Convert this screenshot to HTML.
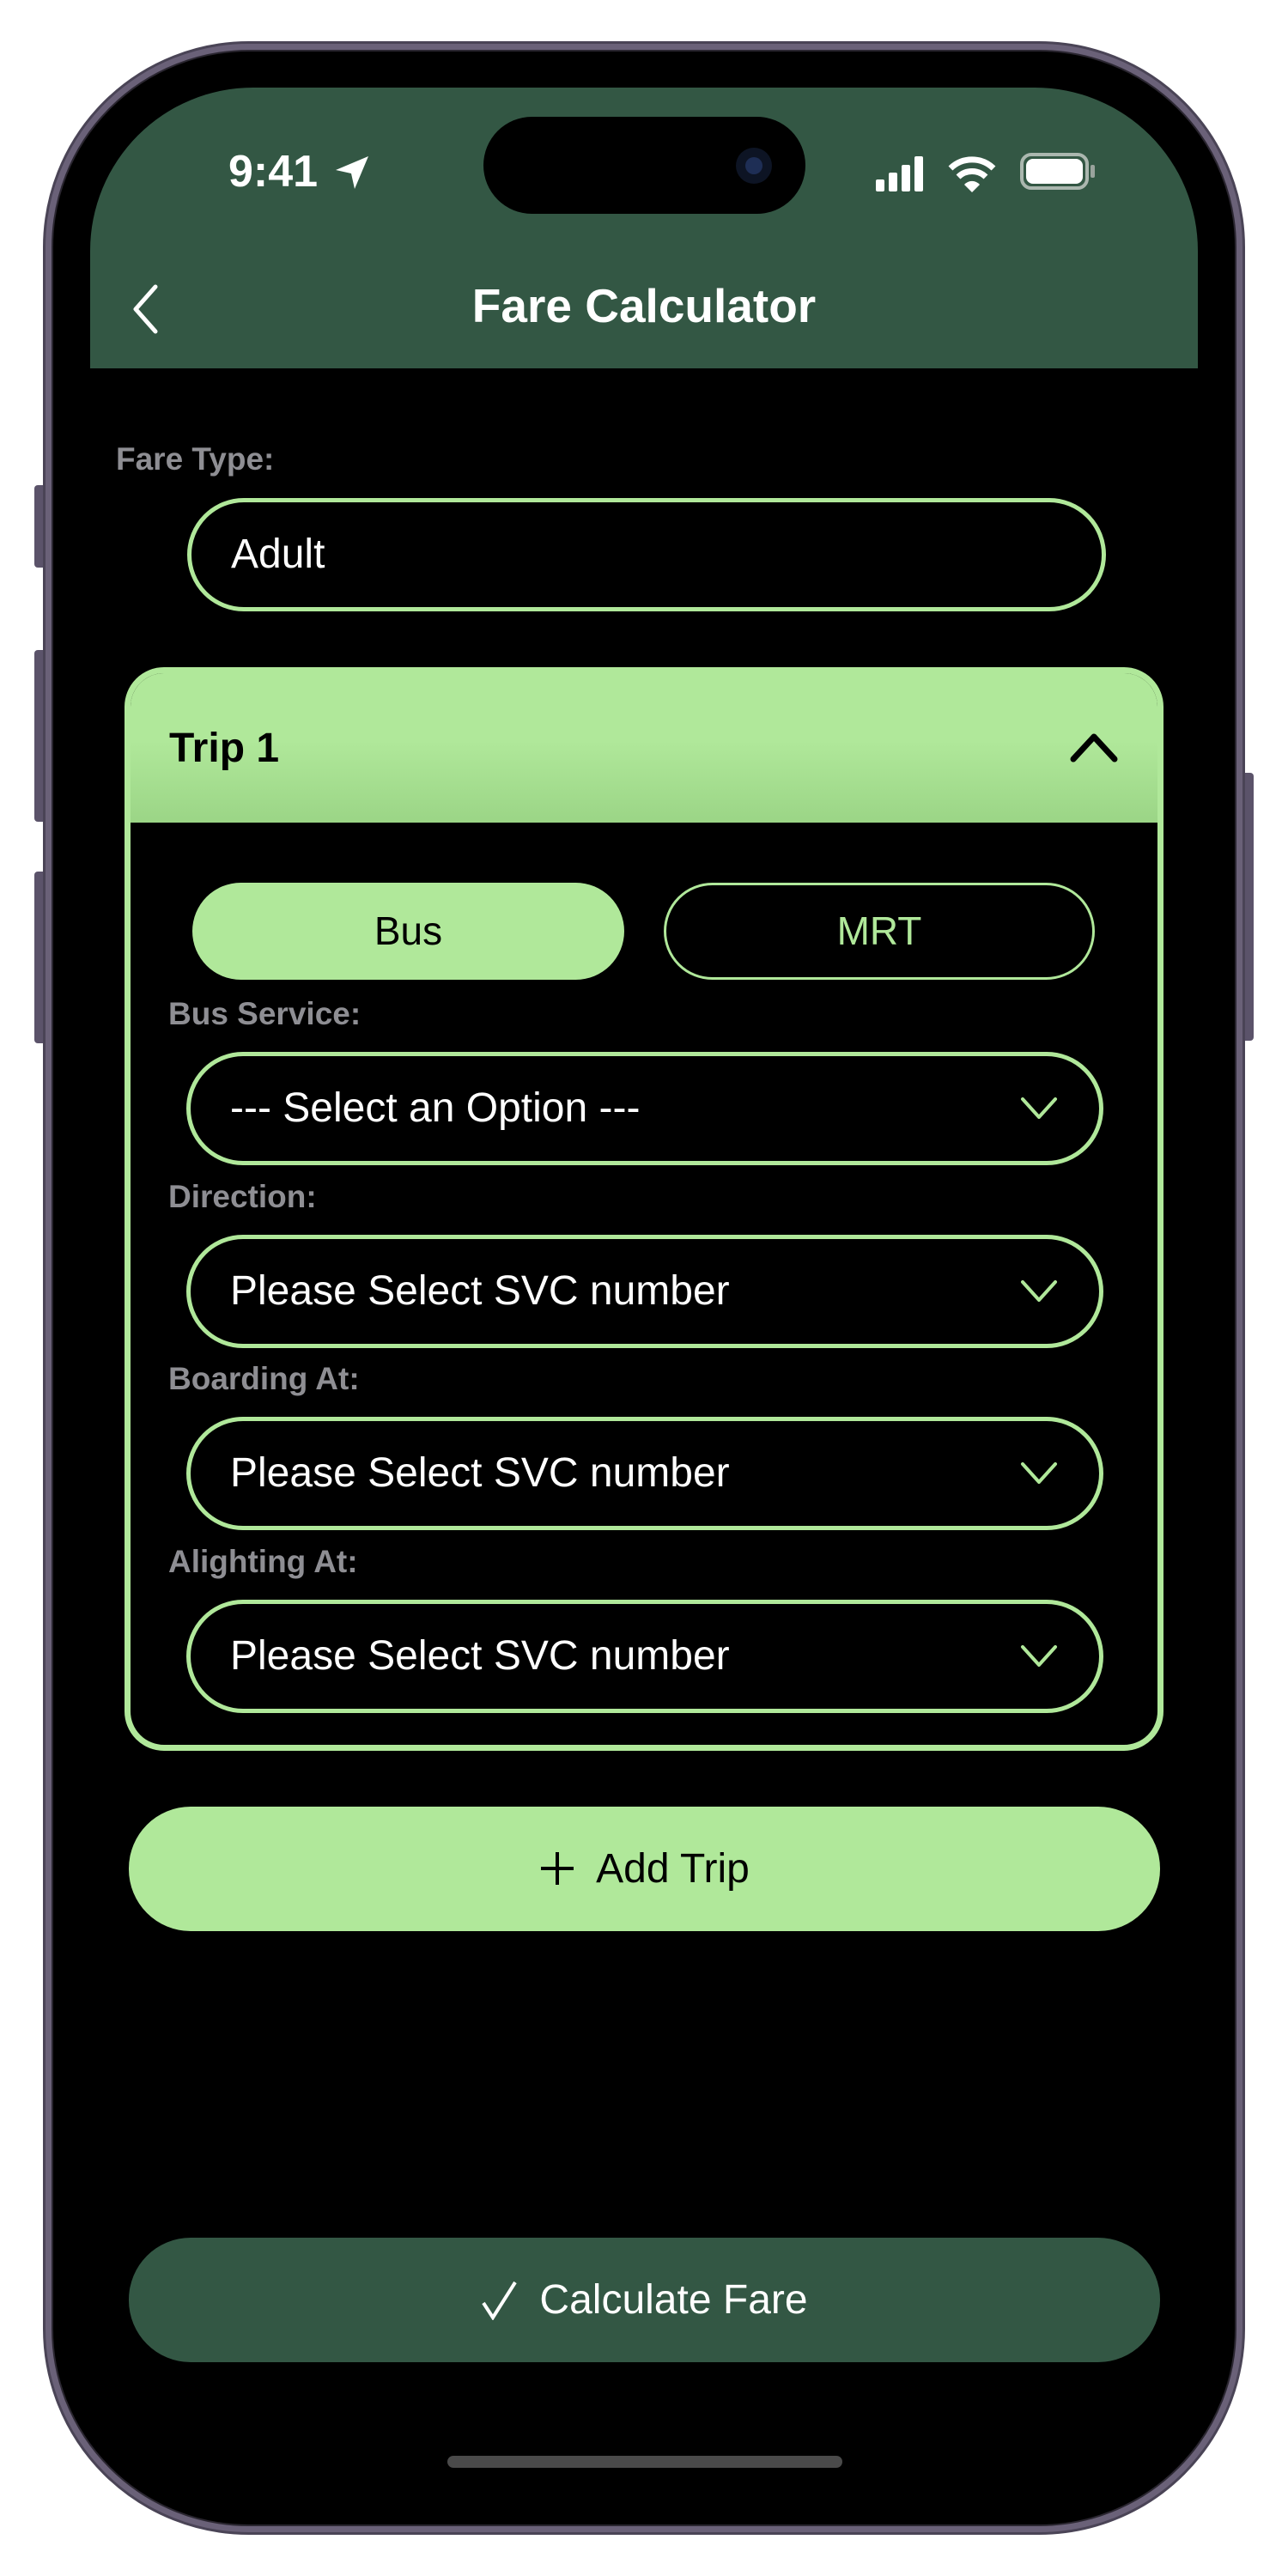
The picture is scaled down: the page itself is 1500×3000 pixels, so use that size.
<!DOCTYPE html>
<html><head><meta charset="utf-8">
<style>
*{margin:0;padding:0;box-sizing:border-box}
body{width:1500px;height:3000px;background:#fff;position:relative;overflow:hidden;font-family:"Liberation Sans",sans-serif}
.abs{position:absolute}
.frame{left:50px;top:48px;width:1400px;height:2904px;border-radius:240px;background:#6a6178;border:3px solid #4a4456}
.bezel{left:60px;top:58px;width:1380px;height:2884px;border-radius:230px;background:#000;border:2px solid #2a2630}
.screen{left:105px;top:102px;width:1290px;height:2796px;border-radius:190px;background:#000;overflow:hidden}
.hdr{left:0;top:0;width:1290px;height:327px;background:#335744}
.btn{background:#5b536a;border-radius:4px}
.lbl{color:#8e8e93;font-weight:bold;font-size:37px}
.field{border:5px solid #b0e89a;border-radius:66px;height:132px;color:#fff;font-size:48px;line-height:122px;padding-left:46px}
.chev{position:absolute;right:48px;top:46px}
</style></head><body>
<div class="abs btn" style="left:40px;top:565px;width:14px;height:96px"></div>
<div class="abs btn" style="left:40px;top:757px;width:14px;height:200px"></div>
<div class="abs btn" style="left:40px;top:1015px;width:14px;height:200px"></div>
<div class="abs btn" style="left:1446px;top:900px;width:14px;height:312px"></div>
<div class="abs frame"></div>
<div class="abs bezel"></div>
<div class="abs screen">
  <div class="abs hdr"></div>
  <div class="abs" style="left:161px;top:68px;color:#fff;font-size:52px;font-weight:bold">9:41</div>
  <svg class="abs" style="left:282px;top:76px" width="46" height="46" viewBox="0 0 46 46"><path d="M42 4 L4 20 L22 24 L26 42 Z" fill="#fff"/></svg>
  <div class="abs" style="left:458px;top:34px;width:375px;height:113px;border-radius:57px;background:#000"></div>
  <div class="abs" style="left:752px;top:70px;width:42px;height:42px;border-radius:21px;background:#0d1424"></div>
  <div class="abs" style="left:763px;top:81px;width:20px;height:20px;border-radius:10px;background:#1e2e55"></div>
  <div class="abs" style="left:915px;top:107px;width:10px;height:14px;background:#fff;border-radius:2px"></div>
  <div class="abs" style="left:930px;top:99px;width:10px;height:22px;background:#fff;border-radius:2px"></div>
  <div class="abs" style="left:945px;top:90px;width:10px;height:31px;background:#fff;border-radius:2px"></div>
  <div class="abs" style="left:960px;top:80px;width:10px;height:41px;background:#fff;border-radius:2px"></div>
  <svg class="abs" style="left:998px;top:78px" width="58" height="46" viewBox="0 0 58 46"><path d="M4 16 A36 36 0 0 1 54 16" stroke="#fff" stroke-width="7" fill="none"/><path d="M13 26 A23 23 0 0 1 45 26" stroke="#fff" stroke-width="7" fill="none"/><path d="M20 35 L29 44 L38 35 A12 12 0 0 0 20 35Z" fill="#fff"/></svg>
  <div class="abs" style="left:1083px;top:76px;width:80px;height:43px;border:4px solid #c9d0cb;border-radius:13px;opacity:.8"></div>
  <div class="abs" style="left:1090px;top:83px;width:66px;height:29px;background:#fff;border-radius:8px"></div>
  <div class="abs" style="left:1165px;top:90px;width:5px;height:15px;background:#9aa39d;border-radius:2px"></div>
  <svg class="abs" style="left:48px;top:228px" width="34" height="60" viewBox="0 0 34 60"><path d="M28 4 L5 30 L28 56" stroke="#fff" stroke-width="5" fill="none" stroke-linecap="round" stroke-linejoin="round"/></svg>
  <div class="abs" style="left:0;width:1290px;top:222px;text-align:center;color:#fff;font-size:55px;font-weight:bold">Fare Calculator</div>
  <div class="abs lbl" style="left:30px;top:412px">Fare Type:</div>
  <div class="abs field" style="left:113px;top:478px;width:1070px;height:132px">Adult</div>
  <div class="abs" style="left:40px;top:675px;width:1210px;height:1262px;border:7px solid #b0e89a;border-radius:46px;background:#000;overflow:hidden">
    <div class="abs" style="left:0;top:0;width:1196px;height:174px;background:linear-gradient(#b0e89a 45%,#9bd586)"></div>
    <div class="abs" style="left:45px;top:60px;font-size:48px;font-weight:bold;color:#000">Trip 1</div>
    <svg class="abs" style="left:1092px;top:66px" width="60" height="40" viewBox="0 0 60 40"><path d="M6 34 L30 8 L54 34" stroke="#000" stroke-width="7" fill="none" stroke-linecap="round" stroke-linejoin="round"/></svg>
  </div>
  <div class="abs" style="left:119px;top:926px;width:503px;height:113px;border-radius:57px;background:#b0e89a;color:#000;font-size:46px;text-align:center;line-height:113px">Bus</div>
  <div class="abs" style="left:668px;top:926px;width:502px;height:113px;border-radius:57px;border:3px solid #b0e89a;color:#b0e89a;font-size:46px;text-align:center;line-height:107px">MRT</div>
  <div class="abs lbl" style="left:91px;top:1058px">Bus Service:</div>
  <div class="abs field" style="left:112px;top:1123px;width:1068px">--- Select an Option ---<svg class="chev" width="44" height="30" viewBox="0 0 44 30"><path d="M3 4 L22 25 L41 4" stroke="#b0e89a" stroke-width="4" fill="none" stroke-linecap="round" stroke-linejoin="round"/></svg></div>
  <div class="abs lbl" style="left:91px;top:1271px">Direction:</div>
  <div class="abs field" style="left:112px;top:1336px;width:1068px">Please Select SVC number<svg class="chev" width="44" height="30" viewBox="0 0 44 30"><path d="M3 4 L22 25 L41 4" stroke="#b0e89a" stroke-width="4" fill="none" stroke-linecap="round" stroke-linejoin="round"/></svg></div>
  <div class="abs lbl" style="left:91px;top:1483px">Boarding At:</div>
  <div class="abs field" style="left:112px;top:1548px;width:1068px">Please Select SVC number<svg class="chev" width="44" height="30" viewBox="0 0 44 30"><path d="M3 4 L22 25 L41 4" stroke="#b0e89a" stroke-width="4" fill="none" stroke-linecap="round" stroke-linejoin="round"/></svg></div>
  <div class="abs lbl" style="left:91px;top:1696px">Alighting At:</div>
  <div class="abs field" style="left:112px;top:1761px;width:1068px">Please Select SVC number<svg class="chev" width="44" height="30" viewBox="0 0 44 30"><path d="M3 4 L22 25 L41 4" stroke="#b0e89a" stroke-width="4" fill="none" stroke-linecap="round" stroke-linejoin="round"/></svg></div>
  <div class="abs" style="left:45px;top:2002px;width:1201px;height:145px;border-radius:72px;background:#b0e89a;color:#000;font-size:48px;text-align:center;line-height:145px"><svg width="42" height="42" viewBox="0 0 42 42" style="vertical-align:-5px;margin-right:24px"><path d="M21 2 V40 M2 21 H40" stroke="#000" stroke-width="4"/></svg>Add Trip</div>
  <div class="abs" style="left:45px;top:2504px;width:1201px;height:145px;border-radius:72px;background:#335744;color:#fff;font-size:48px;text-align:center;line-height:145px"><svg width="44" height="46" viewBox="0 0 44 46" style="vertical-align:-8px;margin-right:24px"><path d="M3 26 L14 43 L40 2" stroke="#fff" stroke-width="4" fill="none"/></svg>Calculate Fare</div>
  <div class="abs" style="left:416px;top:2758px;width:460px;height:14px;border-radius:7px;background:#4a4a4a"></div>
</div>
</body></html>
